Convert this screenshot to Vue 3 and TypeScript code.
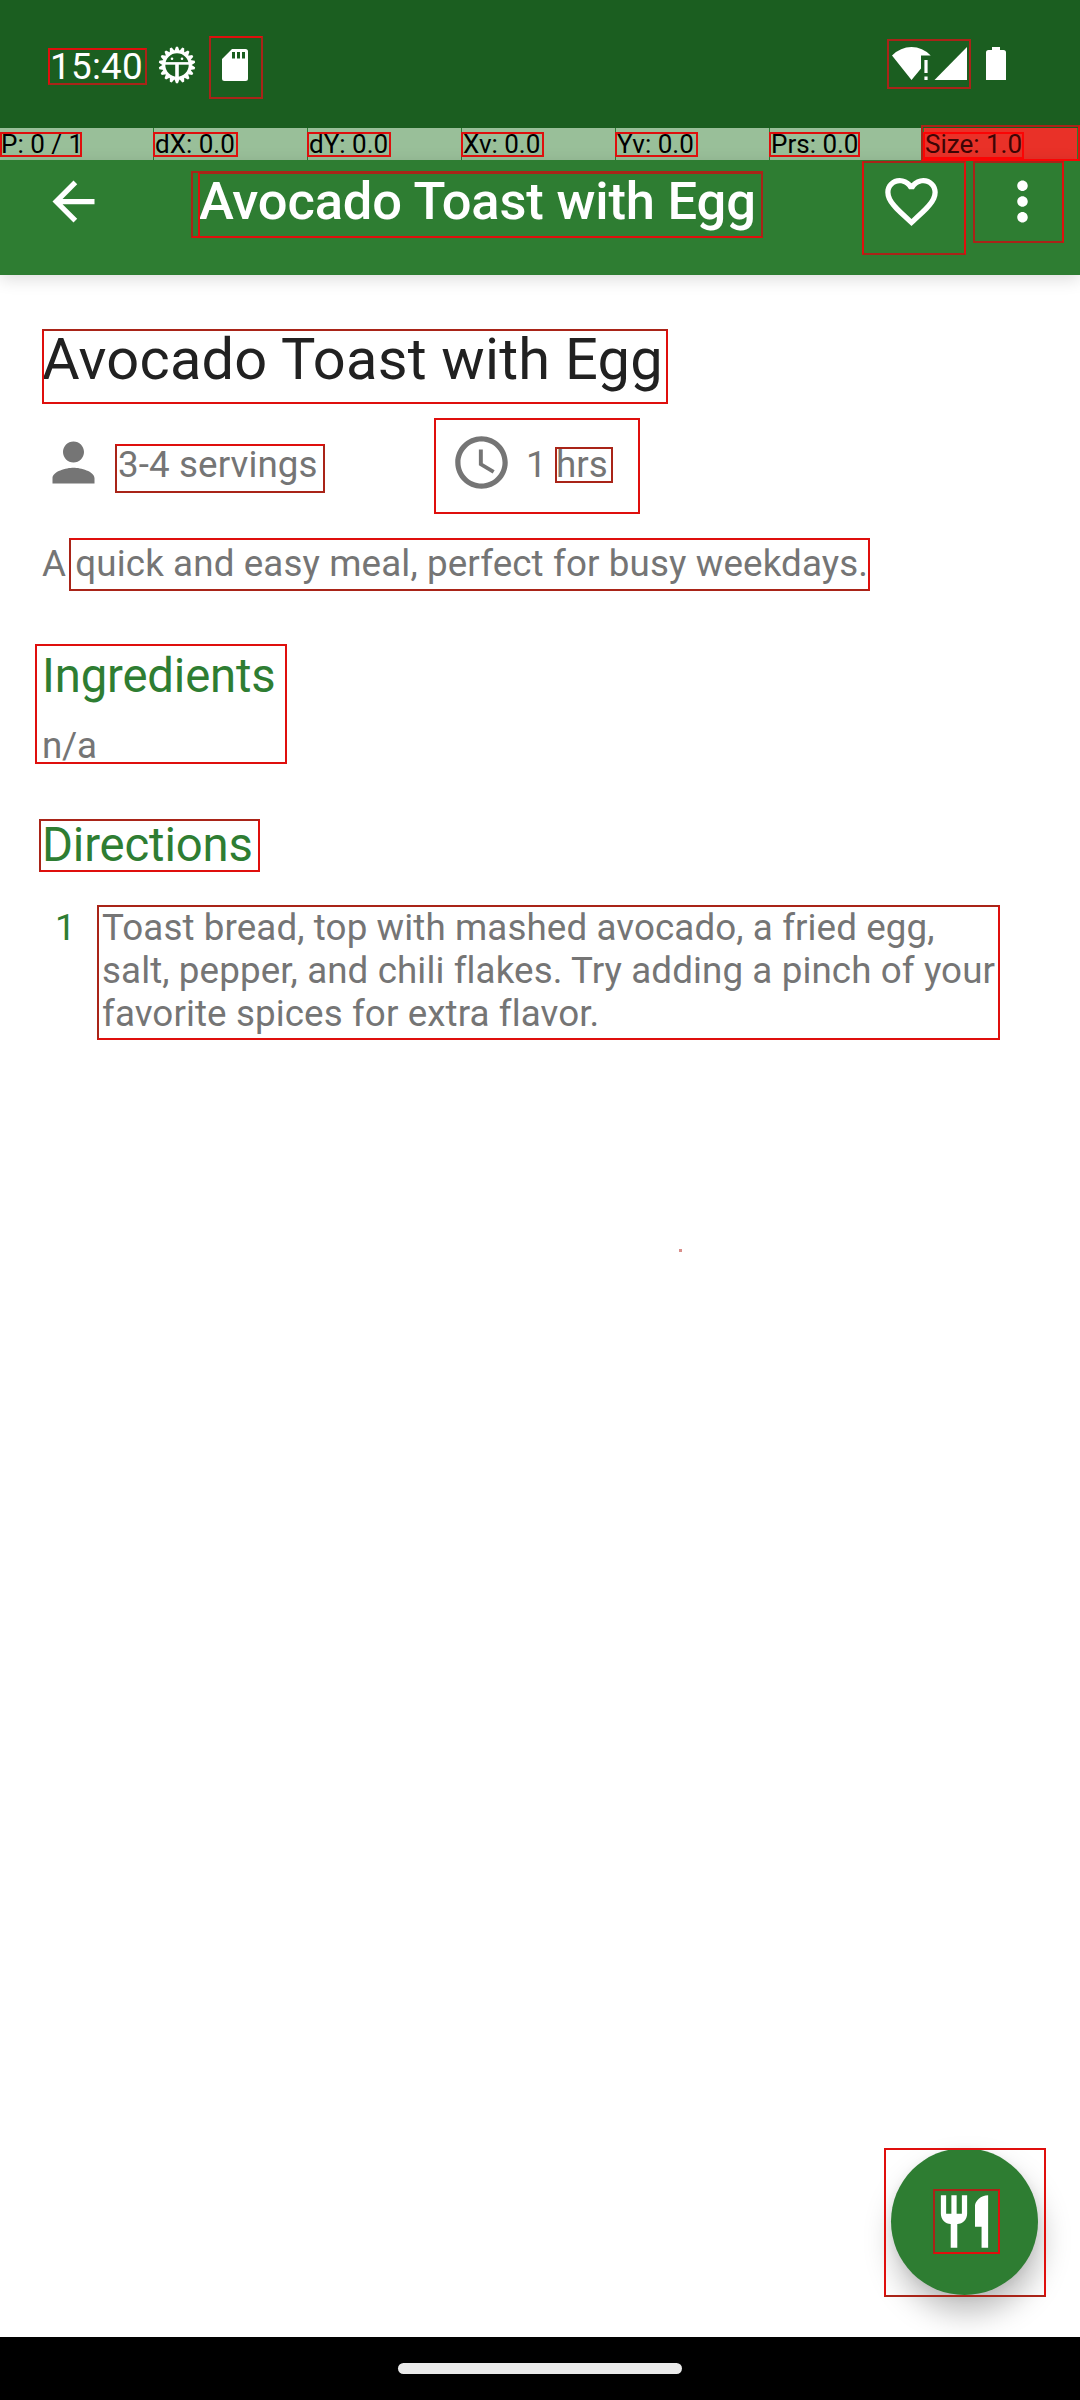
<script setup lang="ts">
interface Outline {
  x1: number
  y1: number
  x2: number
  y2: number
  // top, right, bottom, left: b = bright, d = dark, r = pure red
  tone: string
}

const pointerCells: string[] = ['P: 0 / 1', 'dX: 0.0', 'dY: 0.0', 'Xv: 0.0', 'Yv: 0.0', 'Prs: 0.0', 'Size: 1.0']

const tones: Record<string, string> = { b: '#df0f0d', d: '#a92418', r: '#fb0404' }

const o = (x1: number, y1: number, x2: number, y2: number, tone = 'bbbb'): Outline => ({ x1, y1, x2, y2, tone })

const outlines: Outline[] = [
  o(48, 48, 147, 85, 'bddb'),
  o(209, 36, 263, 99, 'bddd'),
  o(887, 39, 971, 89, 'dddd'),
  o(0, 132, 82, 157),
  o(153, 132, 238, 157),
  o(307, 132, 391, 157),
  o(461, 132, 544, 157),
  o(615, 132, 698, 157),
  o(769, 132, 860, 157),
  o(921, 125, 1080, 161, 'dbrd'),
  o(923, 132, 1024, 159, 'rrrr'),
  o(191, 171, 763, 238, 'ddbd'),
  o(198, 172, 763, 238, 'ddbb'),
  o(862, 161, 966, 255, 'dbdb'),
  o(973, 161, 1064, 243, 'dbdd'),
  o(42, 329, 668, 404, 'dbbb'),
  o(115, 444, 325, 493, 'bddd'),
  o(434, 418, 640, 514),
  o(555, 447, 613, 483, 'dddd'),
  o(69, 538, 870, 591, 'bbdd'),
  o(35, 644, 287, 764),
  o(39, 819, 260, 872, 'dbbd'),
  o(97, 905, 1000, 1040, 'dbbd'),
  o(884, 2148, 1046, 2297, 'bbdb'),
  o(933, 2189, 1000, 2254, 'dbbd'),
]

const boxStyle = (b: Outline) => ({
  left: `${b.x1}px`,
  top: `${b.y1}px`,
  width: `${b.x2 - b.x1}px`,
  height: `${b.y2 - b.y1}px`,
  borderColor: [...b.tone].map((t) => tones[t]).join(' '),
})

const teeth = Array.from({ length: 18 }, (_, i) => i * 20)
</script>

<template>
  <div class="screen">
    <header class="status">
      <span class="time">15:40</span>
      <svg class="gear" viewBox="0 0 38 38" width="38" height="38">
        <path v-for="a in teeth" :key="a" d="M16.4 5 L18 0.8 H20 L21.6 5Z" :transform="`rotate(${a} 19 19)`" fill="#fff" />
        <circle cx="19" cy="19" r="13.2" fill="none" stroke="#fff" stroke-width="3" />
        <path d="M6 17.4H32" stroke="#fff" stroke-width="2.6" fill="none" />
        <path d="M19 18V32" stroke="#fff" stroke-width="3.6" />
        <circle cx="14" cy="12.8" r="1.3" fill="#fff" />
        <circle cx="24" cy="12.8" r="1.3" fill="#fff" />
      </svg>
      <svg class="sd" viewBox="0 0 26 32" width="26" height="32">
        <path fill="#fff" fill-rule="evenodd" d="M10 0H23.5Q26 0 26 2.5V29.5Q26 32 23.5 32H2.5Q0 32 0 29.5V10ZM10 3V9.5H13V3ZM15 3V9.5H18V3ZM20 3V9.5H23V3Z" />
      </svg>
      <svg class="signals" viewBox="0 0 116 34" width="116" height="34">
        <path fill="#fff" d="M0 8.5Q8.5 0 19.5 0T38.7 8.5H29V21.5L19.5 33Z" />
        <path fill="#fff" d="M32.4 13H35.6V26H32.4ZM32.4 29.5H35.6V33H32.4Z" />
        <path fill="#fff" d="M75 0V33H42.5Z" />
        <path fill="#fff" d="M100 0H108V3H111.5Q114 3 114 5.5V33H94V5.5Q94 3 96.5 3H100Z" />
      </svg>
    </header>

    <div class="pointer">
      <span v-for="(c, i) in pointerCells" :key="c" class="cell" :class="{ hot: i === 6 }">{{ c }}</span>
      <span class="rest"></span>
    </div>

    <nav class="toolbar">
      <svg class="ic" viewBox="0 0 24 24"><path fill="#fff" d="M20 11H7.83l5.59-5.59L12 4l-8 8 8 8 1.41-1.41L7.83 13H20v-2z" /></svg>
      <span class="bar-title">Avocado Toast with Egg</span>
      <svg class="ic" viewBox="0 0 24 24"><path fill="#fff" d="M16.5 3c-1.74 0-3.41.81-4.5 2.09C10.91 3.81 9.24 3 7.5 3 4.42 3 2 5.42 2 8.5c0 3.78 3.4 6.86 8.55 11.54L12 21.35l1.45-1.32C18.6 15.36 22 12.28 22 8.5 22 5.42 19.58 3 16.5 3zm-4.4 15.55l-.1.1-.1-.1C7.14 14.24 4 11.39 4 8.5 4 6.5 5.5 5 7.5 5c1.54 0 3.04.99 3.57 2.36h1.87C13.46 5.99 14.96 5 16.5 5c2 0 3.5 1.5 3.5 3.5 0 2.89-3.14 5.74-7.9 10.05z" /></svg>
      <svg class="ic more" viewBox="0 0 24 24"><path fill="#fff" d="M12 8c1.1 0 2-.9 2-2s-.9-2-2-2-2 .9-2 2 .9 2 2 2zm0 2c-1.1 0-2 .9-2 2s.9 2 2 2 2-.9 2-2-.9-2-2-2zm0 6c-1.1 0-2 .9-2 2s.9 2 2 2 2-.9 2-2-.9-2-2-2z" /></svg>
    </nav>

    <main class="content">
      <h1>Avocado Toast with Egg</h1>
      <div class="meta">
        <div class="meta-item">
          <svg class="ic" viewBox="0 0 24 24"><path fill="#757575" d="M12 12c2.21 0 4-1.79 4-4s-1.79-4-4-4-4 1.79-4 4 1.79 4 4 4zm0 2c-2.67 0-8 1.34-8 4v2h16v-2c0-2.66-5.33-4-8-4z" /></svg>
          <span class="servings">3-4 servings</span>
        </div>
        <div class="meta-item">
          <svg class="ic" viewBox="0 0 24 24"><path fill="#757575" d="M11.99 2C6.47 2 2 6.48 2 12s4.47 10 9.99 10C17.52 22 22 17.52 22 12S17.52 2 11.99 2zM12 20c-4.42 0-8-3.58-8-8s3.58-8 8-8 8 3.58 8 8-3.58 8-8 8zM12.5 7H11v6l5.25 3.15.75-1.23-4.5-2.67z" /></svg>
          <span class="hours">1 hrs</span>
        </div>
      </div>
      <p class="desc">A quick and easy meal, perfect for busy weekdays.</p>
      <h2 class="ing">Ingredients</h2>
      <p class="na">n/a</p>
      <h2 class="dir">Directions</h2>
      <div class="step">
        <span class="num">1</span>
        <p>Toast bread, top with mashed avocado, a fried egg,<br />salt, pepper, and chili flakes. Try adding a pinch of your<br />favorite spices for extra flavor.</p>
      </div>
      <button class="fab">
        <svg class="ic" viewBox="0 0 24 24"><path fill="#fff" d="M11 9H9V2H7v7H5V2H3v7c0 2.12 1.66 3.84 3.75 3.97V22h2.5v-9.03C11.34 12.84 13 11.12 13 9V2h-2v7zm5-3v8h2.5v8H21V2c-2.76 0-5 2.24-5 4z" /></svg>
      </button>
    </main>

    <footer class="navbar"><i class="pill"></i></footer>

    <i v-for="(b, i) in outlines" :key="i" class="outline" :style="boxStyle(b)"></i>
    <i class="speck"></i>
  </div>
</template>

<style>
body {
  margin: 0;
  background: #fff;
}
</style>

<style scoped>
.screen {
  position: relative;
  display: flex;
  flex-direction: column;
  width: 1080px;
  height: 2400px;
  overflow: hidden;
  background: #fff;
  font-family: Roboto, 'Liberation Sans', sans-serif;
  font-size: 36.75px;
  line-height: 43px;
  letter-spacing: 0.1px;
  color: #757575;
}
svg {
  display: block;
  flex: none;
}
h1, h2, p {
  margin: 0;
  font-weight: 400;
  white-space: nowrap;
}
.status {
  display: flex;
  align-items: flex-start;
  height: 128px;
  background: #1b5e20;
  color: #fff;
  flex: none;
}
.time {
  width: 108px;
  margin: 45px 0 0 50px;
  letter-spacing: 0.3px;
}
.gear {
  margin-top: 46px;
}
.sd {
  margin: 49px 0 0 26px;
}
.signals {
  margin: 47px 0 0 644px;
}
.pointer {
  display: flex;
  height: 32px;
  flex: none;
  background: #2e7d32;
}
.cell {
  box-sizing: border-box;
  width: 153px;
  margin-right: 1px;
  padding-left: 1px;
  background: #99bf99;
  color: #000;
  font-size: 26px;
  line-height: 32px;
  letter-spacing: 0;
  white-space: nowrap;
}
.cell.hot {
  background: #e93128;
  color: #3d0505;
}
.rest {
  flex: 1;
  background: #99bf99;
}
.toolbar {
  position: relative;
  z-index: 1;
  display: flex;
  align-items: flex-start;
  box-sizing: border-box;
  height: 115px;
  padding: 10px 0 0 42px;
  flex: none;
  background: #2e7d32;
  box-shadow: 0 4px 16px rgba(0, 0, 0, 0.14);
}
.ic {
  width: 63px;
  height: 63px;
}
.bar-title {
  width: 681px;
  margin-left: 94px;
  color: #fff;
  font-size: 52.5px;
  font-weight: 500;
  line-height: 62px;
  letter-spacing: -0.18px;
  white-space: nowrap;
}
.more {
  margin-left: 48px;
}
.content {
  position: relative;
  height: 2062px;
  box-sizing: border-box;
  padding: 50px 42px 0;
  flex: none;
}
h1 {
  color: #212121;
  font-size: 57.75px;
  line-height: 68px;
  letter-spacing: 0.23px;
}
.meta {
  display: grid;
  grid-template-columns: 408px 1fr;
  margin-top: 38px;
}
.meta-item {
  display: flex;
  align-items: flex-start;
}
.servings,
.hours {
  margin: 12px 0 0 13px;
}
.desc {
  margin-top: 48px;
  letter-spacing: 0.12px;
}
h2 {
  color: #2e7d32;
  font-size: 47.25px;
  line-height: 55px;
  letter-spacing: -0.15px;
}
.ing {
  margin-top: 64px;
}
.na {
  margin-top: 20px;
  letter-spacing: -0.2px;
}
.dir {
  margin-top: 51px;
}
.step {
  display: flex;
  margin-top: 33px;
}
.num {
  width: 48px;
  padding-left: 13px;
  box-sizing: border-box;
  margin-right: 12px;
  color: #2e7d32;
}
.fab {
  position: absolute;
  right: 42px;
  bottom: 42px;
  display: flex;
  align-items: center;
  justify-content: center;
  width: 147px;
  height: 147px;
  padding: 0;
  border: 0;
  border-radius: 50%;
  background: #2e7d32;
  box-shadow: 3px 18px 30px rgba(0, 0, 0, 0.26), 0 2px 10px rgba(0, 0, 0, 0.06);
}
.navbar {
  position: relative;
  height: 63px;
  display: flex;
  justify-content: center;
  align-items: flex-start;
  background: #000;
  flex: none;
}
.pill {
  width: 284px;
  height: 11px;
  margin-top: 26px;
  border-radius: 6px;
  background: #eaeaea;
}
.outline {
  position: absolute;
  z-index: 2;
  box-sizing: border-box;
  border: 2px solid;
}
.speck {
  position: absolute;
  z-index: 2;
  left: 679px;
  top: 1249px;
  width: 3px;
  height: 3px;
  background: #d98f8b;
}
</style>
